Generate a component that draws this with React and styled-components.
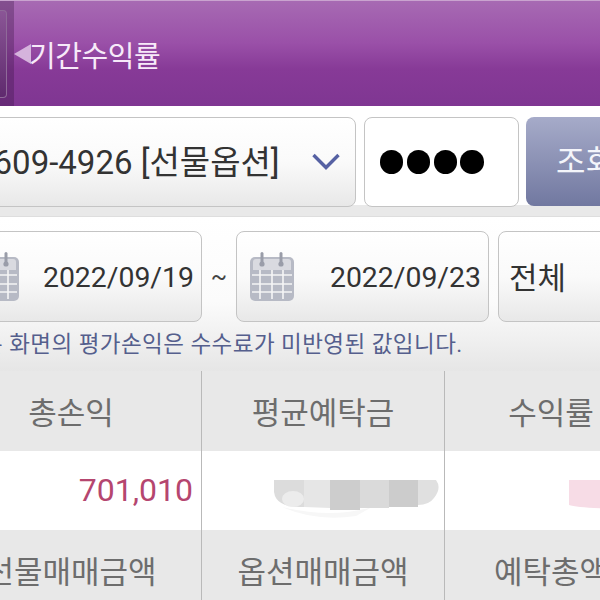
import React from 'react';
import styled, { createGlobalStyle } from 'styled-components';

const GlobalStyle = createGlobalStyle`
  html, body {
    margin: 0;
    padding: 0;
    background: #fff;
    overflow: hidden;
  }
  body {
    font-family: Roboto, "Noto Sans CJK KR", sans-serif;
  }
`;

const Screen = styled.div`
  width: 600px;
  height: 600px;
  overflow: hidden;
`;

const Header = styled.header`
  height: 106px;
  box-sizing: border-box;
  display: flex;
  align-items: center;
  border-top: 1px solid #c9a3cf;
  background: linear-gradient(#a76ab3 0%, #9a50a8 40%, #873a97 65%, #7f3692 100%);
`;

const BackZone = styled.div`
  width: 14px;
  height: 100%;
  flex: none;
  box-sizing: border-box;
  padding: 9px 0 8px;
  background: rgba(50, 15, 60, 0.3);
`;

const BackButton = styled.div`
  width: 7px;
  height: 100%;
  box-sizing: border-box;
  border: 1px solid #8f6a99;
  border-left: 0;
  border-radius: 0 4px 4px 0;
  background: linear-gradient(#8a5596, #5f2a6e);
`;

const BackArrow = styled.div`
  flex: none;
  width: 0;
  height: 0;
  border-top: 10px solid transparent;
  border-bottom: 10px solid transparent;
  border-right: 17px solid #d5b3dc;
`;

const Title = styled.h1`
  margin: 0 0 0 -2px;
  font-size: 29px;
  font-weight: 400;
  color: #f7eaf9;
  letter-spacing: -0.4px;
  position: relative;
`;

const AccountBand = styled.div`
  height: 111px;
  box-sizing: border-box;
  padding-top: 11px;
  display: flex;
  gap: 8px;
  background: linear-gradient(#fff 0 90%, #e9e9e9 90%);
  border-bottom: 1px solid #dedede;
`;

const Field = styled.div`
  box-sizing: border-box;
  height: ${({ $h }) => $h}px;
  width: ${({ $w }) => $w}px;
  margin-left: ${({ $ml }) => $ml || 0}px;
  flex: none;
  display: flex;
  align-items: center;
  border: 1px solid #c4c4c4;
  border-radius: 8px;
  color: #333;
  background: linear-gradient(#fff 0%, #fafafa 50%, #e8e8e8 100%);
`;

const AccountField = styled(Field)`
  justify-content: space-between;
  padding: 0 14px 0 42px;
  font-size: 33px;
  white-space: nowrap;
`;

const AccountText = styled.span`
  margin-bottom: 5px;
`;

const PasswordField = styled(Field)`
  background: #fff;
  gap: 3.4px;
  padding-left: 15px;
`;

const Dot = styled.span`
  width: 23.4px;
  height: 23.4px;
  border-radius: 50%;
  background: #000;
`;

const SearchButton = styled.div`
  flex: none;
  box-sizing: border-box;
  width: 100px;
  height: 89px;
  margin-left: -1px;
  padding: 0 0 5px 30px;
  display: flex;
  align-items: center;
  border-radius: 8px 0 0 8px;
  background: linear-gradient(#a6abc9, #7178a0);
  color: #f4f5fa;
  font-size: 32px;
  white-space: nowrap;
`;

const FilterBand = styled.div`
  height: 154px;
  box-sizing: border-box;
  padding-top: 14px;
  background: linear-gradient(#fff 0%, #fbfbfb 55%, #e6e6e6 100%);
`;

const DateRow = styled.div`
  display: flex;
  align-items: center;
`;

const DateField = styled(Field)`
  justify-content: space-between;
  padding: 1px 7px 0 13px;
  font-size: 28.4px;
`;

const Tilde = styled.span`
  width: 34px;
  flex: none;
  text-align: center;
  font-size: 24px;
  color: #444;
`;

const KindField = styled(Field)`
  padding: 0 0 2px 10px;
  font-size: 31px;
`;

const Notice = styled.p`
  margin: 7px 0 0 -18px;
  font-size: 22.5px;
  line-height: 30px;
  color: #555f8d;
  white-space: nowrap;
  letter-spacing: 0.45px;
`;

const Table = styled.div`
  display: grid;
  grid-template-columns: 260px 243px 213px;
  grid-auto-rows: 79.5px;
  margin-left: -59px;
`;

const Cell = styled.div`
  box-sizing: border-box;
  display: flex;
  align-items: center;
  justify-content: ${({ $end }) => ($end ? 'flex-end' : 'center')};
  border-left: ${({ $first }) => ($first ? '0' : '1px solid #b9b9b9')};
  background: ${({ $head }) => ($head ? '#e8e8e8' : '#fff')};
  color: #6d6d6d;
  font-size: 31px;
  white-space: nowrap;
  overflow: hidden;
`;

const Amount = styled.span`
  color: #b5466f;
  font-size: 32px;
  margin-right: 8px;
`;

const CalendarIcon = () => (
  <svg width="44" height="50" viewBox="0 0 44 50">
    <path
      d="M5 5h34a5 5 0 0 1 5 5v34a5 5 0 0 1-5 5H5a5 5 0 0 1-5-5V10a5 5 0 0 1 5-5z"
      fill="#b7bac5"
    />
    <path d="M3 10a3 3 0 0 1 3-3h32a3 3 0 0 1 3 3v8H3z" fill="#d9dae0" />
    <path
      d="M2 23h40M2 32h40M2 40h40M10 18v29M22 18v29M33 18v29"
      stroke="#f5f5f5"
      strokeWidth="1.6"
      fill="none"
    />
    <rect x="10.5" y="0" width="3" height="14" rx="1.5" fill="#9a9da9" />
    <rect x="29.5" y="0" width="3" height="14" rx="1.5" fill="#9a9da9" />
    <circle cx="12" cy="12" r="2.6" fill="#9a9da9" />
    <circle cx="31" cy="12" r="2.6" fill="#9a9da9" />
  </svg>
);

const ChevronIcon = () => (
  <svg width="30" height="20" viewBox="0 0 30 20">
    <path d="M2.5 3 15 15.5 27.5 3" stroke="#5661a3" strokeWidth="3.4" fill="none" />
  </svg>
);

const BlurredValue = () => (
  <svg width="167" height="42" viewBox="0 0 167 42" style={{ marginRight: 3, marginTop: 18 }}>
    <path d="M8 29q50 12 90 0l-16 9q-40 6-74-9z" fill="#f7f7f7" />
    <path d="M0 2h30v27q-28 1-30-15z" fill="#dcdcdc" />
    <ellipse cx="19" cy="21" rx="11" ry="8" fill="#ececec" />
    <path d="M30 2h26v28l-26-1z" fill="#e6e6e6" />
    <rect x="56" y="2" width="30" height="30" fill="#cdcdcd" />
    <rect x="86" y="2" width="29" height="28" fill="#dadada" />
    <rect x="115" y="2" width="29" height="27" fill="#cccccc" />
    <path d="M144 2h18q6 8-2 18-5 7-16 7z" fill="#e0e0e0" />
  </svg>
);

const BlurredRate = () => (
  <svg width="80" height="30" viewBox="0 0 80 30" style={{ marginRight: 8, marginTop: 8 }}>
    <path d="M0 1h80v29q-68 0-80-4z" fill="#f7dce6" />
  </svg>
);

export default function App() {
  return (
    <Screen>
      <GlobalStyle />
      <Header>
        <BackZone>
          <BackButton />
        </BackZone>
        <BackArrow />
        <Title>기간수익률</Title>
      </Header>

      <AccountBand>
        <AccountField $h={90} $w={424} $ml={-68}>
          <AccountText>0609-4926 [선물옵션]</AccountText>
          <ChevronIcon />
        </AccountField>
        <PasswordField $h={90} $w={155}>
          <Dot />
          <Dot />
          <Dot />
          <Dot />
        </PasswordField>
        <SearchButton>조회</SearchButton>
      </AccountBand>

      <FilterBand>
        <DateRow>
          <DateField $h={91} $w={241} $ml={-39}>
            <CalendarIcon />
            <span>2022/09/19</span>
          </DateField>
          <Tilde>~</Tilde>
          <DateField $h={91} $w={253}>
            <CalendarIcon />
            <span>2022/09/23</span>
          </DateField>
          <KindField $h={91} $w={140} $ml={9}>전체</KindField>
        </DateRow>
        <Notice>본 화면의 평가손익은 수수료가 미반영된 값입니다.</Notice>
      </FilterBand>

      <Table>
        <Cell $head $first>총손익</Cell>
        <Cell $head>평균예탁금</Cell>
        <Cell $head>수익률</Cell>
        <Cell $first $end><Amount>701,010</Amount></Cell>
        <Cell $end><BlurredValue /></Cell>
        <Cell $end><BlurredRate /></Cell>
        <Cell $head $first>선물매매금액</Cell>
        <Cell $head>옵션매매금액</Cell>
        <Cell $head>예탁총액</Cell>
      </Table>
    </Screen>
  );
}
